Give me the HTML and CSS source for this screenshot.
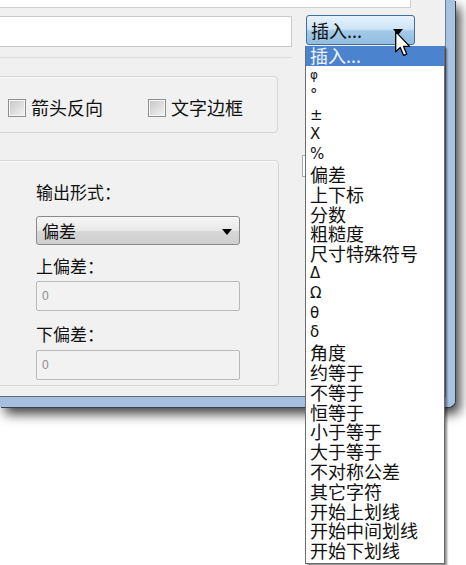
FILE: index.html
```html
<!DOCTYPE html>
<html lang="zh-CN">
<head>
    <meta charset="UTF-8" />
    <title>插入符号</title>
    <link rel="stylesheet" href="styles.css">
</head>
<body>
    <div class="window">
        <div class="client">
            <div class="top-box"></div>
            <div class="row">
                <div class="text-input"></div>
                <div class="combo">插入...<span class="arrow"></span></div>
            </div>
            <div class="panel">
                <div class="left-col">
                    <div class="group flags">
                        <label class="check"><span class="box"></span>箭头反向</label>
                        <label class="check second"><span class="box"></span>文字边框</label>
                    </div>
                    <div class="group output">
                        <div class="label">输出形式：</div>
                        <div class="select">偏差<span class="arrow"></span></div>
                        <div class="label upper">上偏差：</div>
                        <div class="field">0</div>
                        <div class="label lower">下偏差：</div>
                        <div class="field lower">0</div>
                    </div>
                </div>
                <div class="stub"></div>
            </div>
        </div>
    </div>

    <ul class="dropdown">
        <li class="selected">插入...</li>
        <li class="sym small">φ</li>
        <li class="sym">°</li>
        <li class="sym">±</li>
        <li class="sym">X</li>
        <li class="sym">%</li>
        <li>偏差</li>
        <li>上下标</li>
        <li>分数</li>
        <li>粗糙度</li>
        <li>尺寸特殊符号</li>
        <li class="sym">Δ</li>
        <li class="sym">Ω</li>
        <li class="sym">θ</li>
        <li class="sym">δ</li>
        <li>角度</li>
        <li>约等于</li>
        <li>不等于</li>
        <li>恒等于</li>
        <li>小于等于</li>
        <li>大于等于</li>
        <li>不对称公差</li>
        <li>其它字符</li>
        <li>开始上划线</li>
        <li>开始中间划线</li>
        <li>开始下划线</li>
    </ul>

    <svg class="cursor" width="17" height="26" viewBox="0 0 13 20">
        <path d="M0.5 0.5 L0.5 16 L4 12.6 L6.6 18.8 L9 17.8 L6.5 11.8 L11.2 11.8 Z" fill="#fff" stroke="#000" stroke-width="1" stroke-linejoin="round"/>
    </svg>
</body>
</html>
```

FILE: styles.css
```css
/* Win7 style dialog with an open combo list */
body {
    margin: 0;
    width: 466px;
    height: 565px;
    overflow: hidden;
    background: #ffffff;
    font-family: "Noto Sans CJK SC", sans-serif;
    color: #111;
    position: relative;
}
.window {
    width: 446px;
    border-right: 9px solid #a9c2e2;
    border-bottom: 10px solid #a6bfdf;
    border-bottom-right-radius: 7px;
    box-shadow: 1px 1px 0 #33404f, 5px 7px 12px rgba(0, 0, 0, 0.75);
}
.client {
    height: 396px;
    background: #f0f0f0;
    border-right: 1px solid #6f7f93;
    border-bottom: 1px solid #5f6d7e;
    overflow: hidden;
}
.top-box {
    width: 410px;
    height: 7px;
    background: #fff;
    border-right: 1px solid #cfcfcf;
    border-bottom: 1px solid #cfcfcf;
}
.row {
    display: flex;
    align-items: flex-start;
    margin-top: 8px;
}
.text-input {
    width: 291px;
    height: 29px;
    background: #fff;
    border: 1px solid #c9c9c9;
    border-left: none;
}
.combo {
    position: relative;
    margin-left: 14px;
    margin-top: -1px;
    width: 103px;
    height: 28px;
    padding-left: 4px;
    box-sizing: content-box;
    border: 1px solid #3d6f9e;
    border-radius: 3px;
    background: linear-gradient(#e6f2fc, #cfe5f6 45%, #a3c9e8 55%, #90bde2);
    font-size: 18px;
    line-height: 28px;
}
.combo .arrow, .select .arrow {
    position: absolute;
    width: 0;
    height: 0;
    border-left: 5px solid transparent;
    border-right: 5px solid transparent;
    border-top: 6px solid #000;
}
.combo .arrow { right: 11px; top: 13px; }
.select .arrow { right: 7px; top: 12px; }
.panel {
    display: flex;
    align-items: flex-start;
    margin-top: 10px;
}
.left-col {
    width: 292px;
    border-top: 1px solid #dedede;
}
.group {
    margin-left: -10px;
    border: 1px solid #d6d6d6;
    border-radius: 4px;
    box-shadow: inset 1px 1px 0 #fafafa;
    background: #f1f1f1;
}
.flags {
    margin-top: 18px;
    height: 57px;
    display: flex;
    align-items: flex-start;
    padding-left: 17px;
    box-sizing: border-box;
    width: 288px;
}
.check {
    display: flex;
    align-items: center;
    margin-top: 21px;
    font-size: 18px;
    line-height: 19px;
    gap: 5px;
}
.check.second { margin-left: 45px; }
.box {
    width: 16px;
    height: 16px;
    border: 1px solid #8e8f8f;
    background: linear-gradient(135deg, #c4c4c4, #f4f4f4);
    box-shadow: inset 0 0 0 1px #f5f5f5;
}
.output {
    margin-top: 27px;
    width: 289px;
    box-sizing: border-box;
    height: 226px;
    padding: 21px 0 0 45px;
}
.label {
    font-size: 17px;
    line-height: 20px;
}
.label.upper { margin-top: 11px; }
.label.lower { margin-top: 13px; }
.select {
    position: relative;
    margin-top: 14px;
    width: 197px;
    height: 27px;
    padding-left: 5px;
    border: 1px solid #8a8a8a;
    border-radius: 3px;
    background: linear-gradient(#f6f6f6, #e8e8e8 50%, #d8d8d8 51%, #cfcfcf);
    font-size: 17px;
    line-height: 27px;
}
.field {
    margin-top: 5px;
    width: 197px;
    height: 28px;
    padding-left: 5px;
    border: 1px solid #b9b9b9;
    border-radius: 2px;
    background: #f2f2f2;
    font-family: "Liberation Sans", sans-serif;
    font-size: 12px;
    line-height: 28px;
    color: #8c8c8c;
}
.field.lower { margin-top: 6px; }
.stub {
    margin-left: 10px;
    margin-top: 98px;
    width: 140px;
    height: 20px;
    border: 1px solid #a8a8a8;
    background: #fff;
}
.dropdown {
    position: absolute;
    left: 305px;
    top: 46px;
    width: 138px;
    margin: 0;
    padding: 0 0 2px;
    list-style: none;
    background: #fff;
    border: 1px solid #6d6d6d;
    border-top: none;
    box-shadow: 2px 2px 2px rgba(0, 0, 0, 0.45);
    font-size: 18px;
}
.dropdown li {
    height: 19.8px;
    line-height: 19.8px;
    padding-left: 4px;
    white-space: nowrap;
}
.dropdown li.sym {
    font-family: "DejaVu Sans", sans-serif;
    font-size: 15px;
}
.dropdown li.small { font-size: 12px; }
.dropdown li.selected {
    height: 20px;
    background: #4b83cf;
    color: #eef4ff;
}
.cursor {
    position: absolute;
    left: 395px;
    top: 31px;
}
```
